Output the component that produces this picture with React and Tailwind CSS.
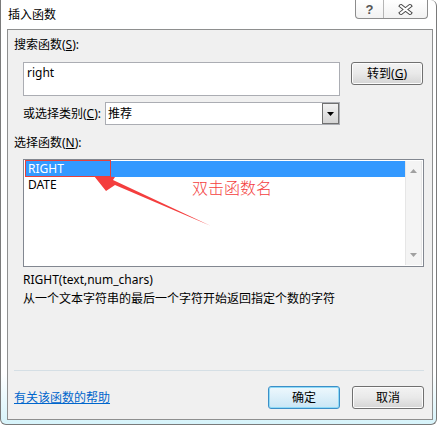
const FONT = "[font-family:'Noto_Sans','Noto_Sans_CJK_SC',sans-serif]";

function WinButton({ children, primary }) {
  return (
    <div
      className={
        "flex h-[23px] w-[72px] items-center justify-center rounded-[3px] border text-[12px] leading-4 text-black " +
        (primary
          ? "border-[#3c8fc8] bg-linear-to-b from-[#eef8fd] to-[#c9e6f5] shadow-[inset_0_0_0_1px_#8fdaf6]"
          : "border-[#707070] bg-linear-to-b from-[#f3f3f3] via-[#e9e9e9] to-[#d5d5d5] shadow-[inset_0_0_0_1px_#fcfcfc]")
      }
    >
      {children}
    </div>
  );
}

function CaptionButtons() {
  return (
    <div className="mr-[8px] flex h-[19px] self-start rounded-b-[4px] border border-t-0 border-[#8c8c8c] bg-linear-to-b from-white to-[#f2f2f2]">
      <div className="flex w-[28px] items-center justify-center border-r border-[#b5b5b5]">
        <span className="[font-family:'Liberation_Sans',sans-serif] text-[13px] leading-none font-bold text-[#555]">?</span>
      </div>
      <div className="flex w-[43px] items-center justify-center">
        <svg width="15" height="11" viewBox="0 0 15 11">
          <path d="M3 2 L12 9 M12 2 L3 9" stroke="#4a4a4a" strokeWidth="4" strokeLinecap="square" />
          <path d="M3 2 L12 9 M12 2 L3 9" stroke="#ffffff" strokeWidth="2" strokeLinecap="square" />
        </svg>
      </div>
    </div>
  );
}

function ListBox() {
  return (
    <div className="relative ml-[15px] mt-[8px] flex h-[108px] w-[401px] border border-[#828790] bg-white p-px">
      <div className="flex-1 pl-px">
        <div className="h-[16px] bg-[#3399ff] pl-[2px] text-[12px] leading-[15px] text-white">RIGHT</div>
        <div className="h-[16px] pl-[2px] text-[12px] leading-[15px] text-black">DATE</div>
      </div>
      <div className="flex w-[17px] flex-col items-center justify-between border-x border-[#e6e6e6] bg-[#f4f4f4] py-[8px]">
        <svg width="7" height="4" viewBox="0 0 7 4">
          <path d="M0 4 L3.5 0 L7 4 Z" fill="#a0a0a0" />
        </svg>
        <svg width="7" height="4" viewBox="0 0 7 4">
          <path d="M0 0 L7 0 L3.5 4 Z" fill="#a0a0a0" />
        </svg>
      </div>

      <div className="absolute left-[1px] top-0 h-[17px] w-[86px] border border-[#e8403a]" />
      <svg className="absolute left-0 top-0" width="200" height="80" viewBox="0 0 200 80">
        <polygon points="70,16 91,17 89,20 187,66 91,25 82,31" fill="#f43e3e" />
      </svg>
      <div className="absolute left-[168px] top-[18px] text-[16px] leading-5 font-light text-[#f43e3e]">双击函数名</div>
    </div>
  );
}

export default function App() {
  return (
    <div className={"h-[427px] w-[439px] overflow-hidden bg-white text-black " + FONT}>
      <div className="flex h-[425px] w-[437px] flex-col rounded-tr-[6px] rounded-b-[6px] border-r border-b border-l border-[#7a7a7a] bg-linear-to-b from-white from-[88%] to-[#d6f3fa]">
        <div className="flex h-[29px] items-center justify-between pl-[7px]">
          <span className="text-[12px] leading-4">插入函数</span>
          <CaptionButtons />
        </div>

        <div className="ml-[6px] flex h-[391px] w-[426px] flex-col border border-[#8e8f8f] bg-[#f0f0f0] pt-[7px] text-[12px] leading-4">
          <div className="pl-[6px]">
            搜索函数(<span className="underline">S</span>):
          </div>

          <div className="mt-[9px] flex pl-[15px]">
            <div className="h-[34px] w-[317px] border border-[#abadb3] bg-white pl-[3px] pt-[2px]">right</div>
            <div className="ml-[11px]">
              <WinButton>
                转到(<span className="underline">G</span>)
              </WinButton>
            </div>
          </div>

          <div className="mt-[6px] flex items-center pl-[15px]">
            <div className="w-[82px]">
              或选择类别(<span className="underline">C</span>):
            </div>
            <div className="flex h-[23px] w-[235px] items-stretch border border-[#abadb3] bg-white">
              <div className="flex flex-1 items-center pl-[2px]">推荐</div>
              <div className="flex w-[17px] items-center justify-center border border-[#707070] bg-linear-to-b from-[#f2f2f2] to-[#d4d4d4]">
                <svg width="7" height="4" viewBox="0 0 7 4">
                  <path d="M0 0 L7 0 L3.5 4 Z" fill="#000" />
                </svg>
              </div>
            </div>
          </div>

          <div className="mt-[10px] pl-[6px]">
            选择函数(<span className="underline">N</span>):
          </div>

          <ListBox />

          <div className="mt-[5px] pl-[15px]">RIGHT(text,num_chars)</div>
          <div className="mt-[3px] pl-[15px]">从一个文本字符串的最后一个字符开始返回指定个数的字符</div>

          <div className="ml-[6px] mt-[63px] h-px w-[410px] bg-[#d5dfe5]" />

          <div className="mt-[15px] flex items-center pr-[8px]">
            <div className="flex-1 pl-[6px] text-[#0066cc] underline">有关该函数的帮助</div>
            <WinButton primary>确定</WinButton>
            <div className="ml-[12px]">
              <WinButton>取消</WinButton>
            </div>
          </div>
        </div>
      </div>
    </div>
  );
}
